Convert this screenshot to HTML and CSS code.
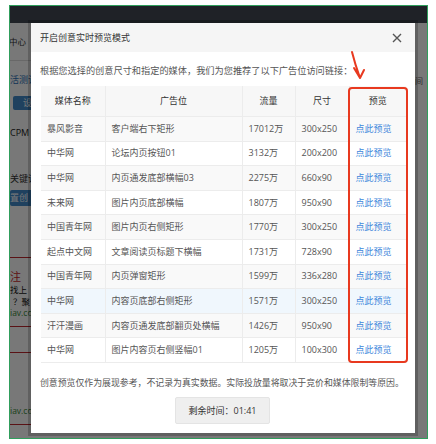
FILE: index.html
```
<!DOCTYPE html>
<html lang="zh-CN">
<head>
<meta charset="utf-8">
<title>开启创意实时预览模式</title>
<link rel="stylesheet" href="styles.css">
</head>
<body>
<div class="frame">
  <div class="page">
    <div class="topbar"></div>
    <div class="page-body">
      <div class="side">
        <div class="nav">中心</div>
        <div class="sub">活测试</div>
        <div class="btn-blue small">设置</div>
        <div class="cpm">CPM</div>
        <div class="kw">关键词</div>
        <div class="btn-blue wide">置创</div>
        <div class="ad first">
          <div class="ad-title">注</div>
          <div class="ad-line">找上</div>
          <div class="ad-line indent">？聚</div>
          <div class="ad-url">iav.co</div>
        </div>
        <div class="ad second">
          <div class="ad-url">iav.co</div>
        </div>
      </div>
      <div class="rside">间</div>
    </div>
  </div>
  <div class="overlay"></div>
  <div class="modal">
    <div class="modal-header">
      <span class="modal-title">开启创意实时预览模式</span>
      <span class="close"><svg viewBox="0 0 10 10" width="10" height="10"><path d="M1 1 L9 9 M9 1 L1 9" stroke="#555" stroke-width="1.4" fill="none"/></svg></span>
    </div>
    <div class="modal-body">
      <p class="intro">根据您选择的创意尺寸和指定的媒体，我们为您推荐了以下广告位访问链接：</p>
      <table class="slots">
        <colgroup><col class="c1"><col class="c2"><col class="c3"><col class="c4"><col class="c5"></colgroup>
        <thead>
          <tr><th>媒体名称</th><th>广告位</th><th>流量</th><th>尺寸</th><th>预览</th></tr>
        </thead>
        <tbody>
          <tr class="odd"><td>暴风影音</td><td>客户端右下矩形</td><td>17012万</td><td>300x250</td><td><a href="#">点此预览</a></td></tr>
          <tr><td>中华网</td><td>论坛内页按钮01</td><td>3132万</td><td>200x200</td><td><a href="#">点此预览</a></td></tr>
          <tr class="odd"><td>中华网</td><td>内页通发底部横幅03</td><td>2275万</td><td>660x90</td><td><a href="#">点此预览</a></td></tr>
          <tr><td>未来网</td><td>图片内页底部横幅</td><td>1807万</td><td>950x90</td><td><a href="#">点此预览</a></td></tr>
          <tr class="odd"><td>中国青年网</td><td>图片内页右侧矩形</td><td>1770万</td><td>300x250</td><td><a href="#">点此预览</a></td></tr>
          <tr><td>起点中文网</td><td>文章阅读页标题下横幅</td><td>1731万</td><td>728x90</td><td><a href="#">点此预览</a></td></tr>
          <tr class="odd"><td>中国青年网</td><td>内页弹窗矩形</td><td>1599万</td><td>336x280</td><td><a href="#">点此预览</a></td></tr>
          <tr class="hover"><td>中华网</td><td>内容页底部右侧矩形</td><td>1571万</td><td>300x250</td><td><a href="#">点此预览</a></td></tr>
          <tr class="odd"><td>汗汗漫画</td><td>内容页通发底部翻页处横幅</td><td>1426万</td><td>950x90</td><td><a href="#">点此预览</a></td></tr>
          <tr><td>中华网</td><td>图片内容页右侧竖幅01</td><td>1205万</td><td>100x300</td><td><a href="#">点此预览</a></td></tr>
        </tbody>
      </table>
      <p class="note">创意预览仅作为展现参考，不记录为真实数据。实际投放量将取决于竞价和媒体限制等原因。</p>
      <div class="actions"><button class="timer" type="button">剩余时间：01:41</button></div>
    </div>
    <div class="mark-box"></div>
    <svg class="mark-arrow" viewBox="0 0 20 32" width="20" height="32"><path d="M5 3 Q8 15 13 29 M7 19 L13 29 L17 21" stroke="#e8391f" stroke-width="2" fill="none" stroke-linecap="round" stroke-linejoin="round"/></svg>
  </div>
</div>
</body>
</html>
```

FILE: styles.css
```
html, body {
  margin: 0;
  padding: 0;
  background: #fff;
  overflow: hidden;
}
body {
  font-family: "Open Sans", "Noto Sans CJK SC", sans-serif;
}
.frame {
  position: relative;
  margin: 5px 0 0 9px;
  width: 417px;
  height: 432px;
  border: 1px solid #2f9e5c;
  overflow: hidden;
}
.page {
  display: flex;
  flex-direction: column;
  height: 100%;
  background: #fff;
}
.topbar {
  height: 17px;
  background: #424853;
  flex: none;
}
.page-body {
  display: flex;
  justify-content: space-between;
  flex: 1;
}
.side {
  width: 120px;
  font-size: 9px;
  color: #333;
}
.nav {
  height: 37px;
  line-height: 37px;
  border-bottom: 1px solid #ddd;
  margin-left: -1px;
  font-size: 8.5px;
  color: #333;
}
.sub {
  margin-top: 12px;
  line-height: 14px;
  color: #2a6fb6;
}
.btn-blue {
  background: #428bca;
  color: #fff;
  border-radius: 2px;
}
.btn-blue.small {
  margin: 9px 0 0 3px;
  height: 14px;
  line-height: 14px;
  padding-left: 10px;
}
.cpm {
  margin-top: 16px;
  line-height: 14px;
  font-size: 9px;
  color: #222;
}
.kw {
  margin-top: 32px;
  line-height: 14px;
}
.btn-blue.wide {
  margin-top: 4px;
  height: 16px;
  line-height: 16px;
}
.ad {
  border-top: 1px solid #c0282d;
  border-bottom: 1px solid #c0282d;
}
.ad.first {
  margin-top: 51px;
  padding: 12px 0 8px;
}
.ad.second {
  margin-top: 25px;
  padding: 52px 0 8px;
}
.ad-title {
  line-height: 14px;
  font-size: 11px;
  color: #c81e2a;
}
.ad-line {
  line-height: 11.5px;
  font-size: 8.5px;
  color: #111;
}
.ad-line.indent {
  padding-left: 3px;
}
.ad-url {
  line-height: 11px;
  font-size: 8.5px;
  color: #3a8a3a;
}
.rside {
  width: 12px;
  padding-top: 52px;
  font-size: 8px;
  color: #666;
  overflow: hidden;
}
.overlay {
  position: absolute;
  inset: 0;
  background: rgba(0, 0, 0, 0.53);
}
.modal {
  position: absolute;
  left: 21px;
  top: 17px;
  width: 384px;
  background: #fff;
  box-shadow: 0 0 0 3px rgba(0, 0, 0, 0.2);
  color: #333;
}
.modal-header {
  height: 29px;
  background: #f5f5f5;
  display: flex;
  align-items: center;
  justify-content: space-between;
  padding: 0 9px;
}
.modal-title {
  font-size: 9px;
  color: #333;
}
.close {
  display: flex;
  margin-right: 4px;
}
.modal-body {
  padding: 12px 10px 9px 9px;
}
.intro {
  margin: 0 0 8px;
  font-size: 9.2px;
  line-height: 14px;
  color: #555;
  white-space: nowrap;
}
.slots {
  width: 365px;
  margin-left: 1px;
  border-collapse: collapse;
  table-layout: fixed;
  font-size: 9px;
  line-height: 12px;
}
.c1 { width: 64px; }
.c2 { width: 137px; }
.c3 { width: 53px; }
.c4 { width: 54px; }
.c5 { width: 57px; }
.slots th {
  height: 30px;
  padding: 0;
  background: #f7f7f7;
  font-weight: normal;
  color: #333;
  text-align: center;
  border: 1px solid #ececec;
  border-top: none;
}
.slots td {
  height: 23.6px;
  padding: 0 0 0 6px;
  color: #555;
  border: 1px solid #ececec;
  white-space: nowrap;
}
.slots th:first-child, .slots td:first-child { border-left: none; }
.slots th:last-child, .slots td:last-child { border-right: none; }
.slots tr.odd td { background: #f9f9f9; }
.slots tr.hover td { background: #f0f7fd; }
.slots a {
  color: #3d86db;
  text-decoration: none;
}
.note {
  margin: 13px 0 0;
  font-size: 8.9px;
  line-height: 14px;
  color: #555;
  white-space: nowrap;
}
.actions {
  display: flex;
  justify-content: center;
  margin-top: 7px;
}
.timer {
  width: 95px;
  height: 27px;
  padding: 0;
  background: #efefef;
  border: 1px solid #e4e4e4;
  border-radius: 2px;
  font-family: "Open Sans", "Noto Sans CJK SC", sans-serif;
  font-size: 9px;
  color: #333;
}
.mark-box {
  position: absolute;
  left: 317px;
  top: 64px;
  width: 56px;
  height: 272px;
  border: 2px solid #e8391f;
  border-radius: 4px;
}
.mark-arrow {
  position: absolute;
  left: 316px;
  top: 26px;
}
```
